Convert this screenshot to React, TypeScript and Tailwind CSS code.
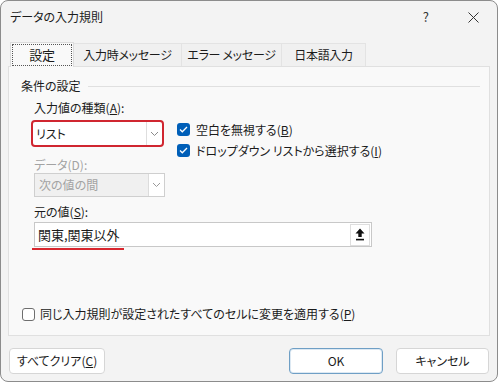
import React from "react";

const font = "font-['Segoe_UI','Noto_Sans_CJK_JP',sans-serif] [font-feature-settings:'palt']";

function Chevron({ muted }: { muted?: boolean }) {
  return (
    <svg width="9" height="6" viewBox="0 0 9 6" className={muted ? "text-[#9a9a9a]" : "text-[#8a8a8a]"}>
      <path d="M1 1l3.5 3.5L8 1" fill="none" stroke="currentColor" strokeWidth="1" />
    </svg>
  );
}

function Check({ checked }: { checked?: boolean }) {
  if (!checked) {
    return <span className="w-[13px] h-[13px] rounded-[3px] border border-[#6e6e6e] bg-white shrink-0" />;
  }
  return (
    <span className="w-[13px] h-[13px] rounded-[3px] bg-[#005fb8] flex items-center justify-center shrink-0">
      <svg width="9" height="7" viewBox="0 0 9 7">
        <path d="M1 3.5l2.3 2.3L8 1" fill="none" stroke="white" strokeWidth="1.3" />
      </svg>
    </span>
  );
}

function Btn({ children, focus }: { children: React.ReactNode; focus?: boolean }) {
  return (
    <button
      className={
        "w-full h-[26px] rounded-[4px] bg-white text-[12px] text-[#1b1b1b] flex items-center justify-center " +
        (focus ? "border border-[#6f9fc5] shadow-[inset_0_0_0_1px_#dde9f3]" : "border border-[#d6d6d6]")
      }
    >
      {children}
    </button>
  );
}

export default function App() {
  return (
    <div className={"w-[500px] h-[384px] bg-white " + font}>
      <div className="w-[498px] h-[382px] rounded-[8px] border border-[#8c8c8c] bg-[#f3f3f3] flex flex-col text-[#1b1b1b] overflow-hidden">
        {/* title bar */}
        <div className="h-[32px] flex items-center pl-[9px] pr-[18px] text-[12px]">
          <span>データの入力規則</span>
          <span className="ml-auto text-[13px] text-[#333]">?</span>
          <svg width="11" height="11" viewBox="0 0 11 11" className="ml-[39px]">
            <path d="M0.5 0.5l10 10M10.5 0.5l-10 10" stroke="#333" strokeWidth="1" />
          </svg>
        </div>

        {/* tabs */}
        <div className="flex items-end pl-[9px] h-[33px] text-[12px] tracking-[-0.3px]">
          <div className="relative z-10 w-[64px] h-[25px] -mb-px bg-[#f9f9f9] border border-b-0 border-[#dcdcdc] p-[1px] text-[13px]">
            <div className="w-full h-full border border-dotted border-[#555] flex items-center justify-center">設定</div>
          </div>
          <div className="w-[108px] h-[23px] bg-[#f0f0f0] border-t border-r border-[#e3e3e3] flex items-center justify-center">入力時メッセージ</div>
          <div className="w-[100px] h-[23px] bg-[#f0f0f0] border-t border-r border-[#e3e3e3] flex items-center justify-center">エラー メッセージ</div>
          <div className="w-[84px] h-[23px] bg-[#f0f0f0] border-t border-r border-[#e3e3e3] flex items-center justify-center">日本語入力</div>
        </div>

        {/* panel */}
        <div className="mx-[7px] h-[270px] bg-[#f9f9f9] border border-[#e0e0e0] flex flex-col text-[12px]">
          <div className="flex items-center pl-[12px] pr-[9px] mt-[11px] h-[16px]">
            <span>条件の設定</span>
            <span className="flex-1 ml-[7px] h-px bg-[#e0e0e0]" />
          </div>

          <div className="pl-[25px] mt-[6px] h-[16px] leading-[16px]">
            入力値の種類(<span className="underline">A</span>):
          </div>

          <div className="flex mt-[4px] h-[27px]">
            <div className="ml-[22px] w-[133px] h-[27px] rounded-[4px] border-2 border-[#d02630] bg-white flex items-center">
              <span className="flex-1 pl-[3px]">リスト</span>
              <span className="w-[16px] h-full border-l border-[#dedede] flex items-center justify-center">
                <Chevron />
              </span>
            </div>
            <div className="ml-[13px] flex flex-col gap-[8px] pt-[3px]">
              <div className="flex items-center gap-[6px] h-[13px]">
                <Check checked />
                <span>空白を無視する(<span className="underline">B</span>)</span>
              </div>
              <div className="flex items-center gap-[6px] h-[13px]">
                <Check checked />
                <span>ドロップダウン リストから選択する(<span className="underline">I</span>)</span>
              </div>
            </div>
          </div>

          <div className="pl-[25px] mt-[10px] h-[16px] leading-[16px] text-[#a3a3a3]">データ(D):</div>

          <div className="ml-[25px] mt-0 w-[131px] h-[24px] border border-[#cfcfcf] bg-[#f0f0f0] flex items-center text-[#a3a3a3]">
            <span className="flex-1 pl-[4px]">次の値の間</span>
            <span className="w-[16px] h-full border-l border-[#dcdcdc] bg-white flex items-center justify-center">
              <Chevron muted />
            </span>
          </div>

          <div className="pl-[25px] mt-[7px] h-[16px] leading-[16px]">
            元の値(<span className="underline">S</span>):
          </div>

          <div className="ml-[25px] mt-[2px] w-[338px] h-[25px] border border-[#c8c8c8] bg-white flex items-center">
            <span className="flex-1 pl-[3px] text-[13px]">関東,関東以外</span>
            <span className="w-[20px] h-[22px] mr-px border border-[#dedede] flex items-center justify-center">
              <svg width="10" height="13" viewBox="0 0 10 13">
                <path d="M5 0.5L9.5 5.5H6.7V9H3.3V5.5H0.5Z" fill="#111" />
                <rect x="1" y="10.8" width="8" height="1.6" fill="#111" />
              </svg>
            </span>
          </div>
          <div className="ml-[23px] mt-[1px] w-[92px] h-[2px] bg-[#d8262e]" />

          <div className="flex items-center gap-[5px] pl-[13px] mt-[57px] h-[14px]">
            <Check />
            <span>同じ入力規則が設定されたすべてのセルに変更を適用する(<span className="underline">P</span>)</span>
          </div>
        </div>

        {/* buttons */}
        <div className="flex items-center px-[8px] mt-[12px]">
          <div className="w-[96px]">
            <Btn>
              <span>すべてクリア(<span className="underline">C</span>)</span>
            </Btn>
          </div>
          <div className="ml-auto w-[94px]">
            <Btn focus>
              <span>OK</span>
            </Btn>
          </div>
          <div className="ml-[13px] w-[93px]">
            <Btn>
              <span>キャンセル</span>
            </Btn>
          </div>
        </div>
      </div>
    </div>
  );
}
